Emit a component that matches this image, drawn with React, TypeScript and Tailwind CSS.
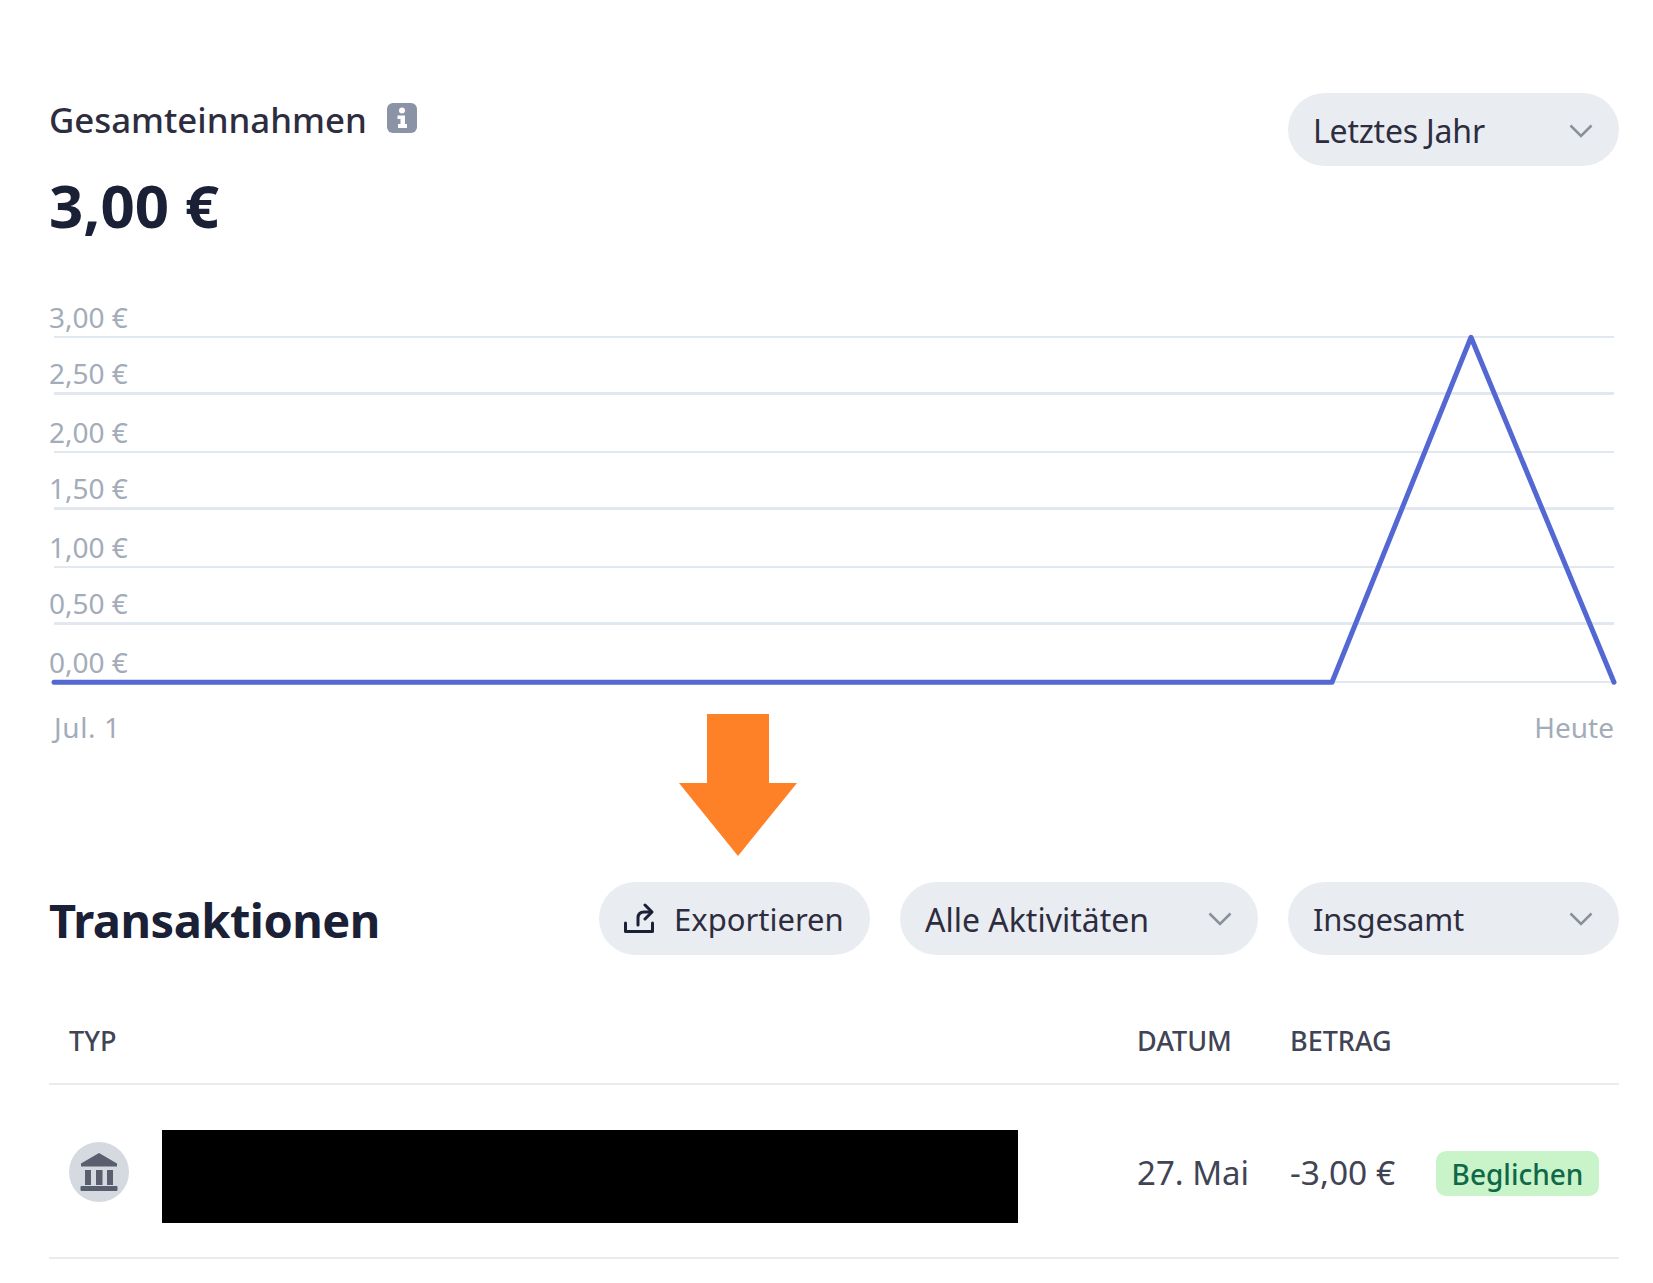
const FONT = "font-['Noto_Sans','Open_Sans',sans-serif]";

const AXIS = ["3,00 €", "2,50 €", "2,00 €", "1,50 €", "1,00 €", "0,50 €", "0,00 €"];

function Chevron() {
  return (
    <svg width="24" height="14" viewBox="0 0 24 14" fill="none" className="mt-[2px] shrink-0">
      <path d="M1.5 1.5 12 12 22.5 1.5" stroke="#8a8f9c" strokeWidth="2.5" />
    </svg>
  );
}

function Select({ label, width, text }: { label: string; width: string; text: string }) {
  return (
    <div className={`flex h-[73px] items-center justify-between rounded-full bg-[#e9ecf0] pl-[25px] pr-[26px] ${width}`}>
      <span className={`mt-[3px] leading-none text-[#2d2d3f] ${text}`}>{label}</span>
      <Chevron />
    </div>
  );
}

function InfoIcon() {
  return (
    <svg width="30" height="30" viewBox="0 0 30 30" className="mt-[-4px] shrink-0">
      <rect width="30" height="30" rx="6" fill="#8a94a6" />
      <circle cx="15" cy="7.5" r="3" fill="#fff" />
      <path d="M10.5 12.5H18V21H20V25H11V21H13.5V16H10.5Z" fill="#fff" />
    </svg>
  );
}

function ExportIcon() {
  return (
    <svg width="30" height="30" viewBox="0 0 30 30" fill="none" className="shrink-0">
      <path d="M1.5 20V28.5H28.5V20" stroke="#1b2035" strokeWidth="3" strokeLinejoin="round" strokeLinecap="round" />
      <path d="M14 22V15Q14 9 20 9H27" stroke="#1b2035" strokeWidth="3" strokeLinecap="round" />
      <path d="M21 2 28 9 21 16" stroke="#1b2035" strokeWidth="3" strokeLinecap="round" strokeLinejoin="round" />
    </svg>
  );
}

function BankIcon() {
  return (
    <div className="mt-[2px] flex h-[60px] w-[60px] shrink-0 items-center justify-center rounded-full bg-[#d5d9e0]">
      <svg width="38" height="38" viewBox="0 0 38 38" fill="#5a5f70">
        <path d="M19 0 37 10.5V13.5H1V10.5Z" />
        <rect x="5" y="17" width="6" height="15" />
        <rect x="16" y="17" width="6.5" height="15" />
        <rect x="27" y="17" width="6" height="15" />
        <rect x="0.5" y="33" width="37" height="5" rx="1" />
      </svg>
    </div>
  );
}

export default function App() {
  return (
    <div className={`relative h-[1283px] w-[1653px] overflow-hidden bg-white pl-[49px] pr-[34px] pt-[93px] ${FONT}`}>
      <div className="flex items-start justify-between">
        <div>
          <div className="flex items-center gap-[20px]">
            <h2 className="text-[34.8px] font-medium leading-[54px] text-[#2d2d3f]">Gesamteinnahmen</h2>
            <InfoIcon />
          </div>
          <div className="mt-[18px] text-[60px] font-bold leading-[80px] text-[#1a2035]">3,00 €</div>
        </div>
        <Select label="Letztes Jahr" width="w-[331px]" text="text-[32px] tracking-[-0.2px]" />
      </div>

      <div className="relative mt-[35px]">
        {AXIS.map((a, i) => (
          <div
            key={a}
            className={`mx-[5px] flex h-[57.5px] items-end border-[#e2e8f0] ${i % 2 === 1 ? "border-b-[3px]" : "border-b-2"}`}
          >
            <span className="-ml-[5px] text-[28px] leading-[38px] text-[#a3acb9]">{a}</span>
          </div>
        ))}
        <svg className="absolute inset-0 h-full w-full overflow-visible" viewBox="0 0 1570 402" fill="none">
          <path d="M5 402H1283L1422 57 1565 402" stroke="#5468d4" strokeWidth="5" strokeLinecap="round" strokeLinejoin="round" />
        </svg>
      </div>

      <div className="ml-[5px] mr-[5px] mt-[24px] flex justify-between text-[28px] leading-[40px] text-[#a3acb9]">
        <span className="tracking-[0.6px]">Jul. 1</span>
        <span>Heute</span>
      </div>

      <div className="mt-[135px] flex items-center">
        <h2 className="mt-[4px] flex-1 text-[47px] font-bold leading-none tracking-[-0.5px] text-[#1a2035]">Transaktionen</h2>
        <div className="flex gap-[30px]">
          <div className="flex h-[73px] w-[271px] items-center gap-[20px] rounded-full bg-[#e9ecf0] pl-[25px]">
            <ExportIcon />
            <span className="mt-[3px] text-[31px] leading-none text-[#2d2d3f]">Exportieren</span>
          </div>
          <Select label="Alle Aktivitäten" width="w-[358px]" text="text-[32px]" />
          <Select label="Insgesamt" width="w-[331px]" text="text-[31px] tracking-[-0.3px]" />
        </div>
      </div>

      <div className="mt-[54px] flex h-[76px] items-start border-b-2 border-[#e9ecef] pl-[20px] pt-[12px] text-[27px] font-medium leading-[40px] text-[#404454]">
        <span className="w-[1068px]">TYP</span>
        <span className="w-[153px]">DATUM</span>
        <span>BETRAG</span>
      </div>
      <div className="flex h-[174px] items-center border-b-2 border-[#e9ecef] pl-[20px]">
        <BankIcon />
        <div className="ml-[33px] mt-[11px] h-[93px] w-[856px] bg-black" />
        <span className="ml-[119px] mt-[4px] w-[153px] text-[33px] text-[#404454]">27. Mai</span>
        <span className="mt-[4px] w-[146px] text-[33.5px] text-[#404454]">-3,00 €</span>
        <span className="mt-[6px] flex h-[45px] w-[163px] items-center justify-center rounded-[10px] bg-[#c9f4c9] text-[28px] font-medium text-[#0f6848]">Beglichen</span>
      </div>

      {/* annotation painted over the screenshot */}
      <svg className="absolute left-[679px] top-[714px]" width="118" height="142" viewBox="0 0 118 142" fill="#fe8027">
        <path d="M28 0H90V69H118L59 142 0 69H28Z" />
      </svg>
    </div>
  );
}
